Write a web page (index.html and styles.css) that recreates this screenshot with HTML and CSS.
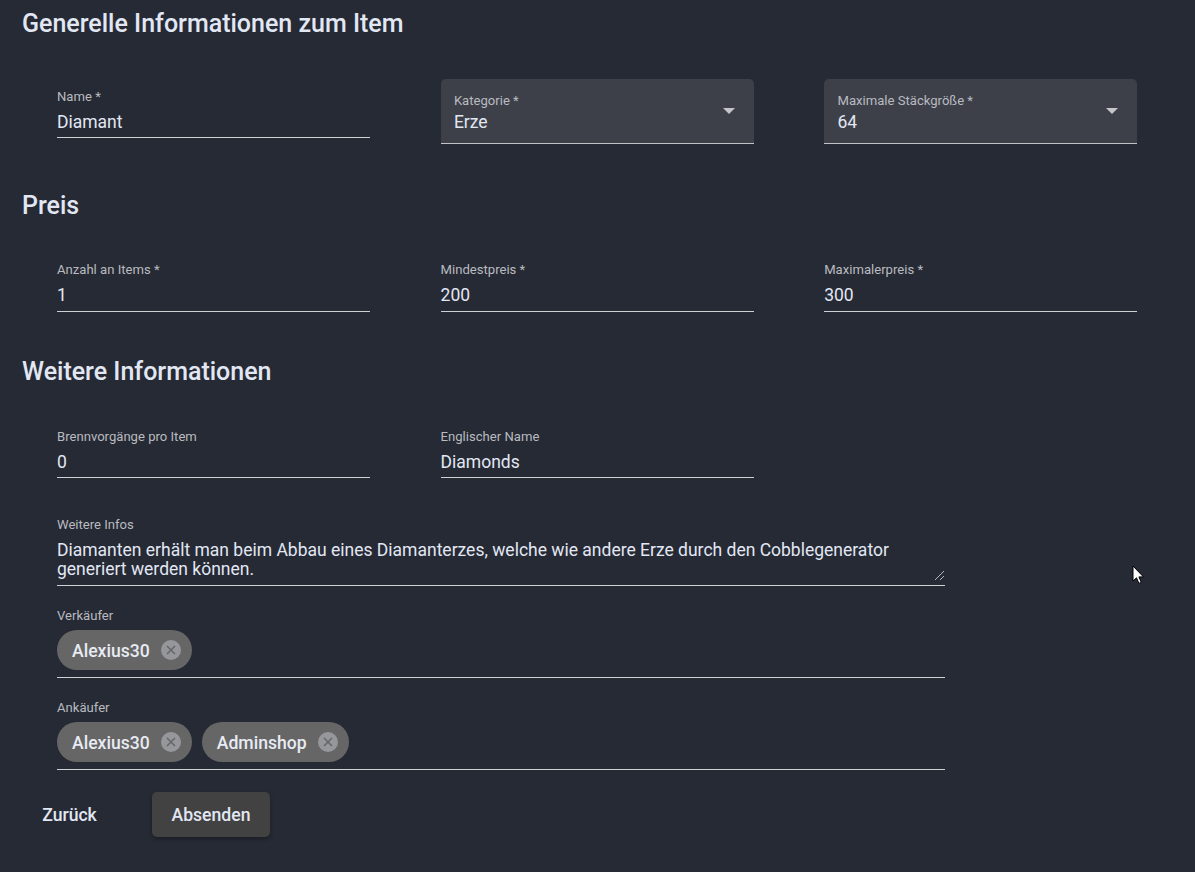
FILE: index.html
```html
<!DOCTYPE html>
<html lang="de">
<head>
  <meta charset="utf-8">
  <title>Item bearbeiten</title>
  <link rel="stylesheet" href="styles.css">
</head>
<body>
  <form class="page">
    <h2 class="title">Generelle Informationen zum Item</h2>
    <div class="row row-general">
      <div class="field field-low">
        <div class="label">Name *</div>
        <div class="value">Diamant</div>
      </div>
      <div class="select">
        <div class="label">Kategorie *</div>
        <div class="value">Erze</div>
        <span class="arrow"></span>
      </div>
      <div class="select">
        <div class="label">Maximale Stäckgröße *</div>
        <div class="value">64</div>
        <span class="arrow"></span>
      </div>
    </div>

    <h2 class="title title-price">Preis</h2>
    <div class="row row-price">
      <div class="field">
        <div class="label">Anzahl an Items *</div>
        <div class="value">1</div>
      </div>
      <div class="field">
        <div class="label">Mindestpreis *</div>
        <div class="value">200</div>
      </div>
      <div class="field">
        <div class="label">Maximalerpreis *</div>
        <div class="value">300</div>
      </div>
    </div>

    <h2 class="title title-more">Weitere Informationen</h2>
    <div class="row row-more">
      <div class="field">
        <div class="label">Brennvorgänge pro Item</div>
        <div class="value">0</div>
      </div>
      <div class="field">
        <div class="label">Englischer Name</div>
        <div class="value">Diamonds</div>
      </div>
    </div>

    <div class="wide wide-info">
      <div class="label">Weitere Infos</div>
      <div class="area">Diamanten erhält man beim Abbau eines Diamanterzes, welche wie andere Erze durch den Cobblegenerator generiert werden können.</div>
      <svg class="grip" width="11" height="11" viewBox="0 0 11 11"><path d="M1 10 10 1M6 10l4-4" stroke="#b8b8b8" fill="none"/></svg>
    </div>

    <div class="wide">
      <div class="label">Verkäufer</div>
      <div class="chips">
        <span class="chip">Alexius30<svg class="chip-x" width="20" height="20" viewBox="0 0 20 20"><circle cx="10" cy="10" r="10" fill="#95979b"/><path d="M6 6l8 8M14 6l-8 8" stroke="#666" stroke-width="1.6"/></svg></span>
      </div>
    </div>

    <div class="wide">
      <div class="label">Ankäufer</div>
      <div class="chips">
        <span class="chip">Alexius30<svg class="chip-x" width="20" height="20" viewBox="0 0 20 20"><circle cx="10" cy="10" r="10" fill="#95979b"/><path d="M6 6l8 8M14 6l-8 8" stroke="#666" stroke-width="1.6"/></svg></span>
        <span class="chip">Adminshop<svg class="chip-x" width="20" height="20" viewBox="0 0 20 20"><circle cx="10" cy="10" r="10" fill="#95979b"/><path d="M6 6l8 8M14 6l-8 8" stroke="#666" stroke-width="1.6"/></svg></span>
      </div>
    </div>

    <div class="actions">
      <button type="button" class="btn-back">Zurück</button>
      <button type="button" class="btn-send">Absenden</button>
    </div>
  </form>

  <svg class="cursor" width="13" height="20" viewBox="0 0 13 20"><path d="M1 1v15l3.5-3.2 2.4 5.6 2.4-1-2.4-5.5H11.500z" fill="#fff" stroke="#000"/></svg>
</body>
</html>
```

FILE: styles.css
```css
/* --- Layout & Basics --- */
*{box-sizing:border-box}
html,body{margin:0;height:100%}
body{background:#262a34;color:#e2e7f4;font-family:Roboto,sans-serif;overflow:hidden}
.page{padding:10px 0 0 22px}

/* --- Headings --- */
.title{margin:0;font-size:25px;line-height:28px;font-weight:500}
.title-price{margin-top:48px}
.title-more{margin-top:46px}

/* --- Rows --- */
.row{display:grid;grid-template-columns:repeat(3,313px);column-gap:70.6px;margin-left:35px;align-items:start}
.row-general{margin-top:41px}
.row-price{margin-top:43px}
.row-price .field{height:49px}
.row-more{margin-top:44px}

/* --- Fields --- */
.label{font-size:13.1px;line-height:14px;color:#b9bbc0;white-space:nowrap}
.value{font-size:17.5px;line-height:24px;margin-top:6px;white-space:nowrap}
.field{height:48px;border-bottom:1px solid #cfd0d3}
.field-low{margin-top:11px}
.select{position:relative;height:65px;padding:15px 13.3px 0;background:#3d4049;border-bottom:1px solid #c2c3c7;border-radius:5px 5px 0 0}
.select .value{margin-top:2px}
.arrow{position:absolute;top:29px;right:19px;border:6.5px solid transparent;border-top-color:#c4c5c8;border-bottom:0}

/* --- Full width fields --- */
.wide{position:relative;width:888px;margin:23px 0 0 35px;border-bottom:1px solid #cfd0d3}
.wide-info{margin-top:40px}
.area{font-size:17.5px;line-height:19px;margin-top:8.5px;padding-bottom:6.5px}
.grip{position:absolute;right:0;bottom:4px}

/* --- Chips --- */
.chips{display:flex;gap:10px;margin-top:7px;padding-bottom:7px}
.chip{display:inline-flex;align-items:center;height:40px;padding:2px 11px 0 15px;border-radius:20px;background:#666;font-size:17.6px;font-weight:500;color:#e8ebf3}
.chip-x{margin:0 0 2px 11px}

/* --- Buttons --- */
.actions{display:flex;align-items:center;margin-top:22px}
.btn-back{margin:0 0 0 20px;padding:0;width:55px;border:0;background:none;color:#e2e7f4;font:500 17.6px Roboto,sans-serif}
.btn-send{margin-left:55px;width:118px;height:45px;border:0;border-radius:5px;background:#424242;color:#e2e7f4;font:500 17.6px Roboto,sans-serif;box-shadow:0 2px 4px rgba(0,0,0,.3)}

/* --- Mouse pointer --- */
.cursor{position:absolute;left:1132px;top:565px}
```
